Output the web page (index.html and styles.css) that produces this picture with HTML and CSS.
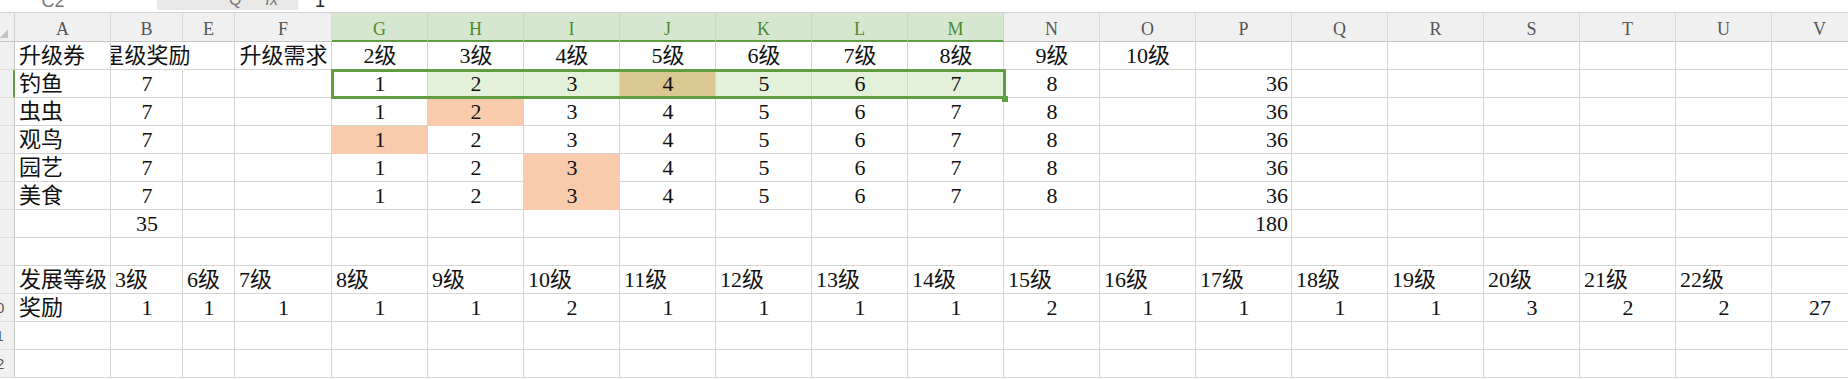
FILE: index.html
```html
<!DOCTYPE html>
<html lang="zh-CN">
<head>
<meta charset="utf-8">
<title>升级券</title>
<link rel="stylesheet" href="styles.css">
</head>
<body>
<div class="topbar">
  <div class="namebox">C2</div>
  <div class="fxbox"><span class="ico">Q</span><span class="ico fx">fx</span></div>
  <div class="formula">1</div>
</div>
<div class="sheet">
  <!-- column headers -->
  <div class="corner"><svg width="9" height="10" viewBox="0 0 9 10"><polygon points="0,10 8,1 8,10" fill="#c4c4c4"/></svg></div>
  <div class="h">A</div><div class="h">B</div><div class="h">E</div><div class="h">F</div>
  <div class="h g">G</div><div class="h g">H</div><div class="h g">I</div><div class="h g">J</div><div class="h g">K</div><div class="h g">L</div><div class="h g">M</div>
  <div class="h">N</div><div class="h">O</div><div class="h">P</div><div class="h">Q</div><div class="h">R</div><div class="h">S</div><div class="h">T</div><div class="h">U</div><div class="h">V</div>

  <!-- row 1 -->
  <div class="rh"><span class="rn">1</span></div>
  <div class="c">升级券</div>
  <div class="c b1"><span>星级奖励</span></div>
  <div class="c"></div>
  <div class="c m">升级需求</div>
  <div class="c m">2级</div><div class="c m">3级</div><div class="c m">4级</div><div class="c m">5级</div><div class="c m">6级</div><div class="c m">7级</div><div class="c m">8级</div><div class="c m">9级</div><div class="c m">10级</div>
  <div class="c"></div><div class="c"></div><div class="c"></div><div class="c"></div><div class="c"></div><div class="c"></div><div class="c"></div>

  <!-- row 2 -->
  <div class="rh active"><span class="rn">2</span></div>
  <div class="c">钓鱼</div><div class="c m">7</div><div class="c"></div><div class="c"></div>
  <div class="c m">1</div><div class="c m sf">2</div><div class="c m sf">3</div><div class="c m tan">4</div><div class="c m sf">5</div><div class="c m sf">6</div><div class="c m sf">7</div>
  <div class="c m">8</div><div class="c"></div><div class="c r">36</div>
  <div class="c"></div><div class="c"></div><div class="c"></div><div class="c"></div><div class="c"></div><div class="c"></div>

  <!-- row 3 -->
  <div class="rh"><span class="rn">3</span></div>
  <div class="c">虫虫</div><div class="c m">7</div><div class="c"></div><div class="c"></div>
  <div class="c m">1</div><div class="c m or">2</div><div class="c m">3</div><div class="c m">4</div><div class="c m">5</div><div class="c m">6</div><div class="c m">7</div>
  <div class="c m">8</div><div class="c"></div><div class="c r">36</div>
  <div class="c"></div><div class="c"></div><div class="c"></div><div class="c"></div><div class="c"></div><div class="c"></div>

  <!-- row 4 -->
  <div class="rh"><span class="rn">4</span></div>
  <div class="c">观鸟</div><div class="c m">7</div><div class="c"></div><div class="c"></div>
  <div class="c m or">1</div><div class="c m">2</div><div class="c m">3</div><div class="c m">4</div><div class="c m">5</div><div class="c m">6</div><div class="c m">7</div>
  <div class="c m">8</div><div class="c"></div><div class="c r">36</div>
  <div class="c"></div><div class="c"></div><div class="c"></div><div class="c"></div><div class="c"></div><div class="c"></div>

  <!-- row 5 -->
  <div class="rh"><span class="rn">5</span></div>
  <div class="c">园艺</div><div class="c m">7</div><div class="c"></div><div class="c"></div>
  <div class="c m">1</div><div class="c m">2</div><div class="c m or">3</div><div class="c m">4</div><div class="c m">5</div><div class="c m">6</div><div class="c m">7</div>
  <div class="c m">8</div><div class="c"></div><div class="c r">36</div>
  <div class="c"></div><div class="c"></div><div class="c"></div><div class="c"></div><div class="c"></div><div class="c"></div>

  <!-- row 6 -->
  <div class="rh"><span class="rn">6</span></div>
  <div class="c">美食</div><div class="c m">7</div><div class="c"></div><div class="c"></div>
  <div class="c m">1</div><div class="c m">2</div><div class="c m or">3</div><div class="c m">4</div><div class="c m">5</div><div class="c m">6</div><div class="c m">7</div>
  <div class="c m">8</div><div class="c"></div><div class="c r">36</div>
  <div class="c"></div><div class="c"></div><div class="c"></div><div class="c"></div><div class="c"></div><div class="c"></div>

  <!-- row 7 -->
  <div class="rh"><span class="rn">7</span></div>
  <div class="c"></div><div class="c m">35</div><div class="c"></div><div class="c"></div>
  <div class="c"></div><div class="c"></div><div class="c"></div><div class="c"></div><div class="c"></div><div class="c"></div><div class="c"></div>
  <div class="c"></div><div class="c"></div><div class="c r">180</div>
  <div class="c"></div><div class="c"></div><div class="c"></div><div class="c"></div><div class="c"></div><div class="c"></div>

  <!-- row 8 -->
  <div class="rh"><span class="rn">8</span></div>
  <div class="c"></div><div class="c"></div><div class="c"></div><div class="c"></div>
  <div class="c"></div><div class="c"></div><div class="c"></div><div class="c"></div><div class="c"></div><div class="c"></div><div class="c"></div>
  <div class="c"></div><div class="c"></div><div class="c"></div>
  <div class="c"></div><div class="c"></div><div class="c"></div><div class="c"></div><div class="c"></div><div class="c"></div>

  <!-- row 9 -->
  <div class="rh"><span class="rn">9</span></div>
  <div class="c">发展等级</div><div class="c">3级</div><div class="c">6级</div><div class="c">7级</div>
  <div class="c">8级</div><div class="c">9级</div><div class="c">10级</div><div class="c">11级</div><div class="c">12级</div><div class="c">13级</div><div class="c">14级</div>
  <div class="c">15级</div><div class="c">16级</div><div class="c">17级</div>
  <div class="c">18级</div><div class="c">19级</div><div class="c">20级</div><div class="c">21级</div><div class="c">22级</div><div class="c"></div>

  <!-- row 10 -->
  <div class="rh"><span class="rn">10</span></div>
  <div class="c">奖励</div><div class="c m">1</div><div class="c m">1</div><div class="c m">1</div>
  <div class="c m">1</div><div class="c m">1</div><div class="c m">2</div><div class="c m">1</div><div class="c m">1</div><div class="c m">1</div><div class="c m">1</div>
  <div class="c m">2</div><div class="c m">1</div><div class="c m">1</div>
  <div class="c m">1</div><div class="c m">1</div><div class="c m">3</div><div class="c m">2</div><div class="c m">2</div><div class="c m">27</div>

  <!-- row 11 -->
  <div class="rh"><span class="rn">11</span></div>
  <div class="c"></div><div class="c"></div><div class="c"></div><div class="c"></div>
  <div class="c"></div><div class="c"></div><div class="c"></div><div class="c"></div><div class="c"></div><div class="c"></div><div class="c"></div>
  <div class="c"></div><div class="c"></div><div class="c"></div>
  <div class="c"></div><div class="c"></div><div class="c"></div><div class="c"></div><div class="c"></div><div class="c"></div>

  <!-- row 12 -->
  <div class="rh"><span class="rn">12</span></div>
  <div class="c"></div><div class="c"></div><div class="c"></div><div class="c"></div>
  <div class="c"></div><div class="c"></div><div class="c"></div><div class="c"></div><div class="c"></div><div class="c"></div><div class="c"></div>
  <div class="c"></div><div class="c"></div><div class="c"></div>
  <div class="c"></div><div class="c"></div><div class="c"></div><div class="c"></div><div class="c"></div><div class="c"></div>

  <!-- selection overlay on G2:M2 -->
  <div class="sel"><div class="handle"></div></div>
</div>
</body>
</html>
```

FILE: styles.css
```css
* { box-sizing: border-box; }
html, body {
  margin: 0;
  padding: 0;
  background: #fff;
  overflow: hidden;
}
body {
  width: 1848px;
  height: 379px;
  font-family: "Liberation Serif", "Noto Sans CJK SC", serif;
  color: #111;
}

/* formula bar strip (mostly scrolled off) */
.topbar {
  height: 13px;
  border-bottom: 1px solid #d3d3d3;
  display: flex;
  overflow: hidden;
  font-family: "Liberation Sans", "Noto Sans CJK SC", sans-serif;
}
.namebox {
  width: 106px;
  height: 12px;
  font-size: 18px;
  line-height: 0;
  padding-top: 1px;
  color: #777;
  text-align: center;
}
.fxbox {
  width: 141px;
  height: 10px;
  margin-left: 51px;
  background: #e8e8e8;
  display: flex;
  gap: 24px;
  padding-left: 72px;
  font-size: 16px;
  line-height: 0;
  color: #777;
}
.fxbox .fx { font-style: italic; }
.formula {
  padding-left: 17px;
  padding-top: 1px;
  font-size: 18px;
  line-height: 0;
  color: #222;
}

/* sheet grid */
.sheet {
  position: relative;
  display: grid;
  grid-template-columns: 15px 96px 72px 52px 97px repeat(16, 96px);
  grid-template-rows: 29px repeat(12, 28px);
}

.corner {
  background: #f0f0f0;
  border-right: 1px solid #d0d0d0;
  border-bottom: 1px solid #c4c4c4;
  display: flex;
  align-items: flex-end;
  padding-bottom: 3px;
}
.corner svg { display: block; }

.h {
  background: #f0f0f0;
  border-right: 1px solid #d8d8d8;
  border-bottom: 1px solid #c4c4c4;
  text-align: center;
  font-size: 18px;
  line-height: 18px;
  padding-top: 7px;
  color: #555;
}
.h.g {
  background: #d6e7d0;
  color: #4c8c2f;
  border-right-color: #c5dcbd;
  border-bottom: 2px solid #5f9e41;
}

.rh {
  background: #f0f0f0;
  border-right: 1px solid #c8c8c8;
  border-bottom: 1px solid #dcdcdc;
  overflow: hidden;
  display: flex;
  justify-content: flex-end;
  font-family: "Liberation Sans", sans-serif;
  font-size: 15px;
  line-height: 27px;
  color: #555;
}
.rh.active { border-right: 2px solid #5f9e41; }
.rn { flex: 0 0 36px; text-align: center; }

.c {
  border-right: 1px solid #d4d4d4;
  border-bottom: 1px solid #d4d4d4;
  font-size: 22px;
  line-height: 22px;
  padding: 3px 3px 0 4px;
  white-space: nowrap;
  overflow: hidden;
}
.m { text-align: center; }
.r { text-align: right; }

/* B1: centered text spilling into E1, cut off at A1 */
.b1 {
  display: flex;
  justify-content: center;
  padding: 3px 0 0;
  overflow: visible;
  clip-path: inset(0 -120px 0 0);
  border-right-color: transparent;
}
.b1 span { flex: none; }

.sf { background: #e3f1d9; }
.tan { background: #dac792; }
.or { background: #f8cbad; border-color: #f8cbad; }

/* selection rectangle over G2:M2 */
.sel {
  position: absolute;
  grid-row: 3 / 4;
  grid-column: 6 / 13;
  top: -1px;
  left: -1px;
  right: -2px;
  bottom: -1px;
  border: 3px solid #5f9e41;
  pointer-events: none;
}
.handle {
  position: absolute;
  right: -5px;
  bottom: -6px;
  width: 6px;
  height: 6px;
  background: #5f9e41;
}
```
